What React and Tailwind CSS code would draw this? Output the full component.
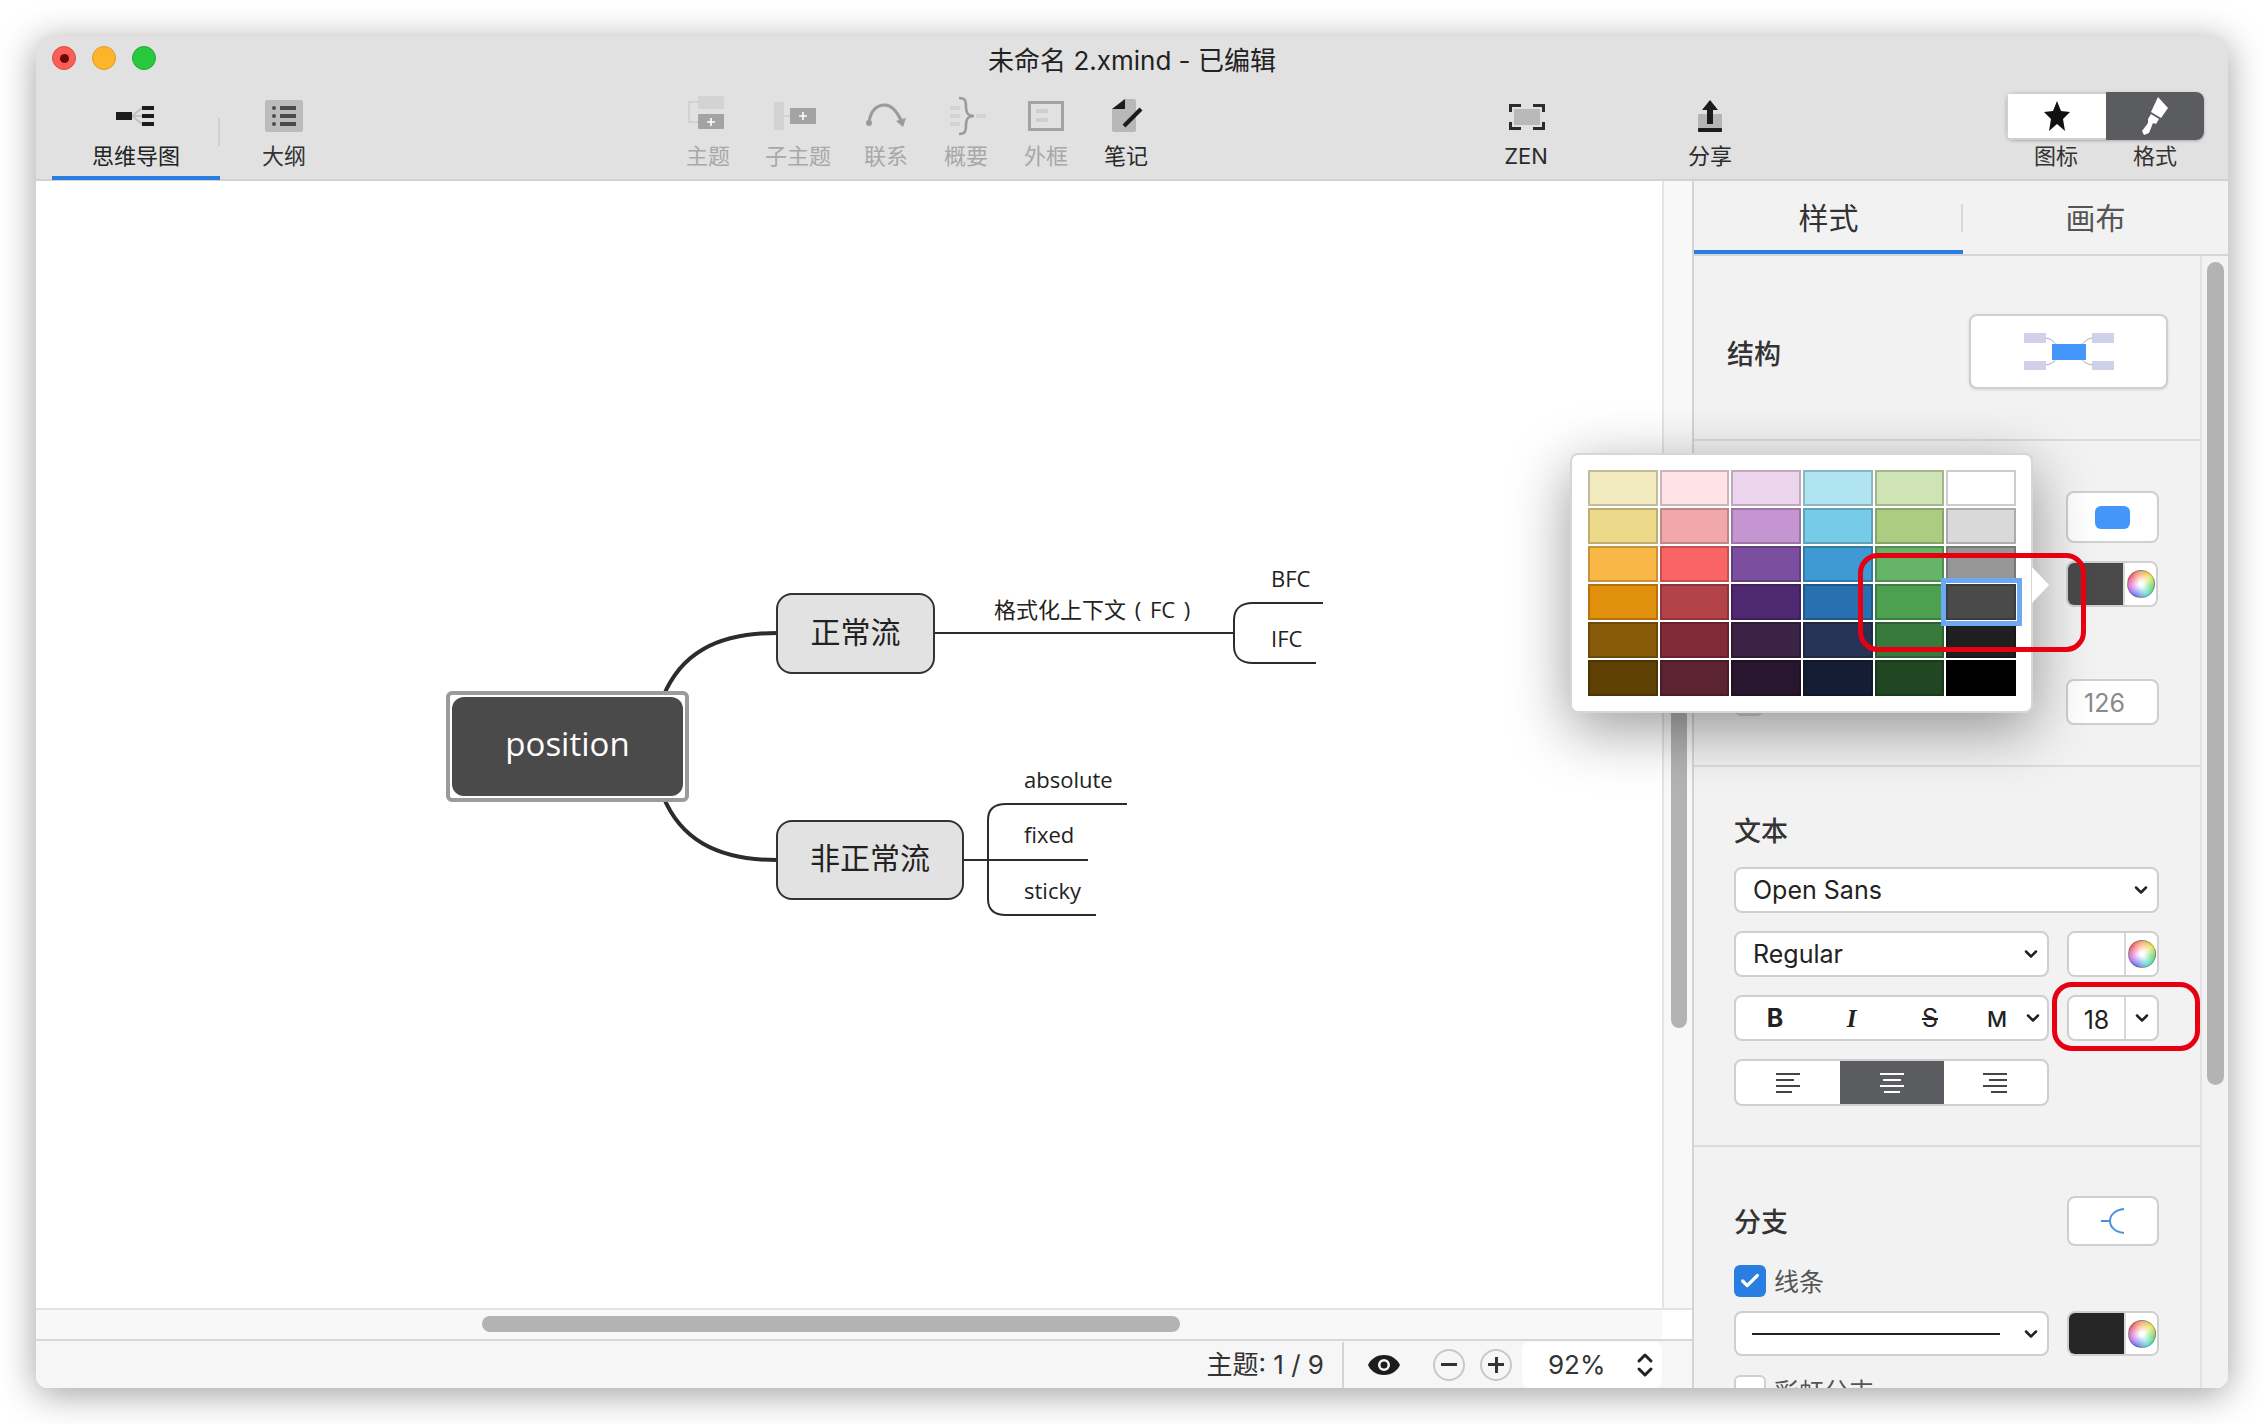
import { ChevronDown, ChevronUp, Check } from "lucide-react";

const swatches = [
  ["#f3ebc0", "#ffe3e6", "#ecd5ec", "#b0e4f1", "#cee4b4", "#ffffff"],
  ["#edd98a", "#f2a8a8", "#c495d0", "#76cce8", "#accc82", "#d9d9d9"],
  ["#f9b747", "#f96464", "#7b4ea0", "#3f9ad4", "#65b366", "#969696"],
  ["#e0900d", "#b34249", "#4f2872", "#2870b0", "#4ca050", "#4a4a4a"],
  ["#8a5a0b", "#822b38", "#3a2345", "#273355", "#377a3b", "#1f1f1f"],
  ["#5f4004", "#5c2332", "#28162f", "#141d33", "#214622", "#000000"],
];

function Icon({ children }) {
  return (
    <svg width="50" height="50" viewBox="0 0 50 50">
      {children}
    </svg>
  );
}

function ToolItem({ label, dim, className, children }) {
  return (
    <div className={`flex w-20 flex-col items-center ${className || ""}`}>
      <Icon>{children}</Icon>
      <div className={`-mt-[1px] text-[22px] leading-[30px] ${dim ? "text-[#a8a8a8]" : "text-[#2b2b2b]"}`}>{label}</div>
    </div>
  );
}

function Plus({ cx, cy }) {
  return <path d={`M${cx - 4} ${cy}H${cx + 4}M${cx} ${cy - 4}V${cy + 4}`} stroke="#fff" strokeWidth="1.6" />;
}

function Toolbar() {
  return (
    <div className="flex pl-4 pt-2">
      <div className="relative flex w-[168px] flex-col items-center">
        <Icon>
          <path d="M21 24L31 16M21 24H31M21 24L31 32" stroke="#c2c2c2" strokeWidth="2" />
          <rect x="5" y="20" width="16" height="8" fill="#1c1c1c" />
          <rect x="31" y="14" width="12" height="4" fill="#1c1c1c" />
          <rect x="31" y="22" width="12" height="4" fill="#1c1c1c" />
          <rect x="31" y="30" width="12" height="4" fill="#1c1c1c" />
        </Icon>
        <div className="-mt-[1px] text-[22px] leading-[30px] text-[#222]">思维导图</div>
        <div className="mt-[5px] h-1 w-full bg-[#2a7de1]" />
        <div className="absolute right-0 top-[26px] h-[28px] w-[2px] bg-[#cfcfcf]" />
      </div>
      <div className="flex w-[128px] flex-col items-center">
        <Icon>
          <rect x="6" y="8" width="38" height="32" rx="2" fill="#bcbcbc" />
          <g fill="#4a4a4a">
            <circle cx="15" cy="16" r="2" />
            <circle cx="15" cy="24" r="2" />
            <circle cx="15" cy="32" r="2" />
            <rect x="21" y="14" width="16" height="4" />
            <rect x="21" y="22" width="16" height="4" />
            <rect x="21" y="30" width="16" height="4" />
          </g>
        </Icon>
        <div className="-mt-[1px] text-[22px] leading-[30px] text-[#333]">大纲</div>
      </div>

      <ToolItem dim label="主题" className="ml-[320px]">
        <rect x="15" y="4" width="26" height="13" rx="1" fill="#d3d3d3" />
        <path d="M15 10H6V30H15" fill="none" stroke="#d3d3d3" strokeWidth="2" />
        <rect x="15" y="22" width="26" height="15" rx="1" fill="#a3a3a3" />
        <Plus cx={28} cy={30} />
      </ToolItem>
      <ToolItem dim label="子主题" className="ml-[10px]">
        <rect x="1" y="10" width="10" height="28" fill="#d3d3d3" />
        <path d="M11 24H17" stroke="#d3d3d3" strokeWidth="2" />
        <rect x="17" y="16" width="26" height="16" rx="1" fill="#a3a3a3" />
        <Plus cx={30} cy={24} />
      </ToolItem>
      <ToolItem dim label="联系" className="ml-2">
        <path d="M8 30C10 18 16 13 24 13C31 13 36 20 40 28" fill="none" stroke="#9a9a9a" strokeWidth="3" />
        <circle cx="8" cy="31" r="3" fill="#9a9a9a" />
        <path d="M35 29L45 26L42 35Z" fill="#9a9a9a" />
      </ToolItem>
      <ToolItem dim label="概要">
        <rect x="9" y="14" width="10" height="4" fill="#d3d3d3" />
        <rect x="9" y="22" width="10" height="4" fill="#d3d3d3" />
        <rect x="9" y="30" width="10" height="4" fill="#d3d3d3" />
        <path d="M18 6C25 6 25 10 25 15C25 20 26 24 33 24C26 24 25 28 25 33C25 38 25 42 18 42" fill="none" stroke="#9a9a9a" strokeWidth="2.6" />
        <rect x="35" y="22" width="10" height="4" fill="#d3d3d3" />
      </ToolItem>
      <ToolItem dim label="外框">
        <rect x="8.5" y="10.5" width="33" height="27" fill="none" stroke="#a3a3a3" strokeWidth="3" />
        <rect x="15" y="17" width="12" height="4" fill="#cfcfcf" />
        <rect x="15" y="26" width="12" height="4" fill="#cfcfcf" />
      </ToolItem>
      <ToolItem label="笔记">
        <path d="M24 7H33C34 7 35 8 35 9V38C35 39 34 40 33 40H13C12 40 11 39 11 38V17Z" fill="#b8b8b8" />
        <path d="M11 17L24 7V17Z" fill="#1c1c1c" />
        <path d="M23 34L40 17" stroke="#1c1c1c" strokeWidth="4" />
      </ToolItem>

      <ToolItem label="ZEN" className="ml-[320px]">
        <rect x="13" y="17" width="26" height="16" fill="#b9b9b9" />
        <path d="M9.5 20V13.5H20M32 13.5H42.5V20M42.5 30V36.5H32M20 36.5H9.5V30" fill="none" stroke="#2c2c2c" strokeWidth="3" />
      </ToolItem>
      <ToolItem label="分享" className="ml-[104px]">
        <rect x="13" y="22" width="24" height="18" rx="1" fill="#b5b5b5" />
        <rect x="13" y="36" width="24" height="4" rx="1" fill="#1c1c1c" />
        <path d="M25 8L17 18H22V32H28V18H33Z" fill="#1c1c1c" />
      </ToolItem>

      <div className="ml-[256px] flex flex-col">
        <div className="flex h-12 w-[198px] overflow-hidden rounded-lg shadow-[0_1px_3px_rgba(0,0,0,0.25)]">
          <div className="flex w-[100px] items-center justify-center border-2 border-r-0 border-[#cfcfcf] bg-white">
            <svg width="28" height="34" viewBox="0 0 28 34">
              <path d="M14 2L18 12L27 13L20 20L22 32L14 25L6 32L8 20L1 13L10 12Z" fill="#111" />
            </svg>
          </div>
          <div className="flex flex-1 items-center justify-center bg-[#5b5c60]">
            <svg width="28" height="40" viewBox="0 0 28 40">
              <path d="M17 1L27 12L20 22L10 16Z" fill="#fff" />
              <path d="M10 18L18 23L15 28L12 27L8 37L3 39L1 35L7 27L7 23Z" fill="#fff" />
            </svg>
          </div>
        </div>
        <div className="flex">
          <div className="mt-[1px] w-[100px] text-center text-[22px] leading-[30px] text-[#333]">图标</div>
          <div className="mt-[1px] w-[98px] text-center text-[22px] leading-[30px] text-[#333]">格式</div>
        </div>
      </div>
    </div>
  );
}

function MindMap() {
  return (
    <div className="relative min-w-0 flex-1 bg-white font-['Open_Sans','Noto_Sans_CJK_SC',sans-serif] text-[#222]">
      <svg className="absolute inset-0" width="1626" height="1127" viewBox="36 181 1626 1127" fill="none" stroke="#2c2c2c">
        <path d="M663 697C680 655 715 633 777 633" strokeWidth="4" />
        <path d="M663 796C680 838 715 860 777 860" strokeWidth="4" />
        <path d="M934 633H1233" strokeWidth="2" />
        <path d="M1323 603H1253C1240 603 1234 610 1234 620V646C1234 656 1240 663 1253 663H1316" strokeWidth="2" />
        <path d="M963 860H1088" strokeWidth="2" />
        <path d="M1127 804H1006C994 804 988 810 988 820V899C988 909 994 915 1006 915H1096" strokeWidth="2" />
      </svg>

      <div className="absolute left-[410px] top-[510px] flex h-[111px] w-[243px] rounded-md border-4 border-[#9b9b9b] bg-white p-[2px]">
        <div className="flex flex-1 items-center justify-center rounded-xl bg-[#4a4a4a] pb-[5px] text-[33px] text-white">position</div>
      </div>
      <div className="absolute left-[740px] top-[412px] flex h-[81px] w-[159px] items-center justify-center rounded-2xl border-2 border-[#333] bg-[#e2e2e2] pb-[5px] text-[30px]">正常流</div>
      <div className="absolute left-[740px] top-[639px] flex h-[80px] w-[188px] items-center justify-center rounded-2xl border-2 border-[#333] bg-[#e2e2e2] pb-[5px] text-[30px]">非正常流</div>

      <div className="absolute left-[958px] top-[412px] text-[22px] leading-8 [word-spacing:3px]">格式化上下文 ( FC )</div>
      <div className="absolute left-[1235px] top-[381px] text-[22px] leading-8">BFC</div>
      <div className="absolute left-[1235px] top-[441px] text-[22px] leading-8">IFC</div>
      <div className="absolute left-[988px] top-[582px] text-[22px] leading-8">absolute</div>
      <div className="absolute left-[988px] top-[637px] text-[22px] leading-8">fixed</div>
      <div className="absolute left-[988px] top-[693px] text-[22px] leading-8">sticky</div>
    </div>
  );
}

function ColorWheel() {
  return (
    <div className="flex flex-1 items-center justify-center bg-white">
      <div className="h-7 w-7 rounded-full border border-black/20 [background:radial-gradient(circle,#fff_10%,transparent_72%),conic-gradient(#f7a35c,#e8e25a,#63d96b,#5fd8d8,#6a78f0,#d86ae0,#f05c6a,#f7a35c)]" />
    </div>
  );
}

function ColorButton({ color }) {
  return (
    <div className="flex h-full w-[92px] overflow-hidden rounded-lg border-2 border-[#cfcfcf] bg-white">
      <div className={`w-[57px] border-r-2 border-[#d8d8d8] ${color}`} />
      <ColorWheel />
    </div>
  );
}

function Field({ className, children }) {
  return (
    <div className={`flex items-center rounded-lg border-2 border-[#cfcfcf] bg-white text-[25px] ${className || ""}`}>
      {children}
    </div>
  );
}

function AlignIcon({ widths, align, stroke }) {
  const rows = [0, 1, 2, 3];
  return (
    <svg width="24" height="20" viewBox="0 0 24 20" stroke={stroke} strokeWidth="2">
      {rows.map((r) => {
        const w = widths[r];
        const x = align === "left" ? 0 : align === "center" ? (24 - w) / 2 : 24 - w;
        return <path key={r} d={`M${x} ${r * 6 + 1}H${x + w}`} />;
      })}
    </svg>
  );
}

function Sidebar() {
  return (
    <div className="flex w-[536px] shrink-0 flex-col overflow-hidden border-l-2 border-[#d4d4d4] bg-[#f2f2f2]">
      <div className="relative flex h-[75px] shrink-0 border-b-2 border-[#d6d6d6]">
        <div className="flex w-[269px] flex-col items-center">
          <div className="flex h-[69px] items-center pt-[5px] text-[30px] text-[#333]">样式</div>
          <div className="h-1 w-full bg-[#2a7de1]" />
        </div>
        <div className="flex flex-1 items-center justify-center pt-[1px] text-[30px] text-[#555]">画布</div>
        <div className="absolute left-[267px] top-[23px] h-[28px] w-[2px] bg-[#d8d8d8]" />
      </div>
      <div className="flex min-h-0 flex-1">
        <div className="w-[508px] shrink-0 border-r-2 border-[#e2e2e2]">
          <div className="flex h-[185px] items-start justify-between border-b-2 border-[#dcdcdc] pl-[33px] pr-[32px] pt-[58px]">
            <div className="mt-[23px] text-[27px] font-medium leading-9 text-[#333]">结构</div>
            <div className="flex h-[75px] w-[199px] items-center justify-center rounded-lg border-2 border-[#cfcfcf] bg-white shadow-[0_1px_3px_rgba(0,0,0,0.12)]">
              <svg width="90" height="37" viewBox="0 0 90 37">
                <path d="M22 5C28 6 31 10 33 13M22 32C28 31 31 28 33 25M68 5C62 6 59 10 57 13M68 32C62 31 59 28 57 25" fill="none" stroke="#a8a8a8" />
                <rect x="0" y="0" width="22" height="10" fill="#d0d0ea" />
                <rect x="0" y="28" width="22" height="9" fill="#d0d0ea" />
                <rect x="68" y="0" width="22" height="10" fill="#d0d0ea" />
                <rect x="68" y="28" width="22" height="9" fill="#d0d0ea" />
                <rect x="28" y="11" width="34" height="16" fill="#4596fb" />
              </svg>
            </div>
          </div>

          <div className="flex h-[326px] justify-between border-b-2 border-[#dcdcdc] pl-[41px] pr-[41px] pt-[50px]">
            <div className="mt-[199px] h-[26px] w-7 rounded-md border-2 border-[#cfcfcf] bg-[#dcdcdc]" />
            <div className="flex w-[93px] flex-col">
              <div className="flex h-[52px] items-center justify-center rounded-lg border-2 border-[#cfcfcf] bg-white">
                <div className="h-[23px] w-[35px] rounded-md bg-[#4596fb]" />
              </div>
              <div className="mt-[18px] h-[46px]">
                <ColorButton color="bg-[#4a4a4a]" />
              </div>
              <Field className="mt-[72px] h-[46px] pl-4 pt-[3px] text-[#8a8a8a]">126</Field>
            </div>
          </div>

          <div className="h-[380px] border-b-2 border-[#dcdcdc] pl-10 pt-[47px]">
            <div className="text-[27px] font-medium leading-9 text-[#333]">文本</div>
            <Field className="mt-[17px] h-[46px] w-[425px] justify-between pl-[17px] pr-[6px] text-[#222]">
              <span className="pt-[2px]">Open Sans</span>
              <ChevronDown size={20} strokeWidth={3} color="#222" />
            </Field>
            <div className="mt-[18px] flex h-[46px] gap-[18px]">
              <Field className="w-[315px] justify-between pl-[17px] pr-[6px] text-[#222]">
                <span className="pt-[2px]">Regular</span>
                <ChevronDown size={20} strokeWidth={3} color="#222" />
              </Field>
              <ColorButton color="bg-white" />
            </div>
            <div className="mt-[18px] flex h-[46px] gap-[18px]">
              <Field className="w-[315px] text-[#222]">
                <span className="w-[78px] pt-[2px] text-center font-bold">B</span>
                <span className="w-[75px] pt-[2px] text-center font-['Liberation_Serif',serif] font-bold italic">I</span>
                <span className="w-[82px] pt-[2px] text-center line-through">S</span>
                <span className="w-[52px] pt-[2px] text-center text-[22px] font-medium">M</span>
                <ChevronDown size={20} strokeWidth={3} color="#222" />
              </Field>
              <Field className="w-[92px] overflow-hidden text-[#222]">
                <span className="h-[42px] w-[57px] border-r-2 border-[#d8d8d8] pt-[2px] text-center leading-[42px]">18</span>
                <span className="flex flex-1 justify-center">
                  <ChevronDown size={20} strokeWidth={3} color="#222" />
                </span>
              </Field>
            </div>
            <div className="mt-[18px] flex h-[47px] w-[315px] overflow-hidden rounded-lg border-2 border-[#cfcfcf] bg-white">
              <div className="flex flex-1 items-center justify-center">
                <AlignIcon widths={[24, 18, 24, 16]} align="left" stroke="#444" />
              </div>
              <div className="flex w-[104px] items-center justify-center bg-[#5b5c60]">
                <AlignIcon widths={[24, 18, 24, 16]} align="center" stroke="#fff" />
              </div>
              <div className="flex flex-1 items-center justify-center">
                <AlignIcon widths={[24, 18, 24, 16]} align="right" stroke="#444" />
              </div>
            </div>
          </div>

          <div className="pl-10 pr-[41px] pt-[49px]">
            <div className="flex h-[50px] items-center justify-between">
              <div className="pt-[4px] text-[27px] font-medium leading-9 text-[#333]">分支</div>
              <div className="flex h-full w-[92px] items-center justify-center rounded-lg border-2 border-[#cfcfcf] bg-white">
                <svg width="24" height="26" viewBox="0 0 24 26" fill="none" stroke="#4a90e2" strokeWidth="2">
                  <path d="M0 13H9M23 1C14 2 9 7 9 13C9 19 14 24 23 25" />
                </svg>
              </div>
            </div>
            <div className="mt-[19px] flex h-8 items-center gap-2">
              <div className="flex h-8 w-8 items-center justify-center rounded-md bg-[#2a7de1]">
                <Check size={22} strokeWidth={3.5} color="#fff" />
              </div>
              <span className="pt-[3px] text-[25px] text-[#555]">线条</span>
            </div>
            <div className="mt-[14px] flex h-[45px] gap-[18px]">
              <Field className="w-[315px] justify-between pl-4 pr-[6px]">
                <div className="h-[2px] w-[248px] bg-[#222]" />
                <ChevronDown size={20} strokeWidth={3} color="#222" />
              </Field>
              <ColorButton color="bg-[#262626]" />
            </div>
            <div className="mt-[19px] flex h-8 items-center gap-2">
              <div className="h-8 w-8 rounded-md border-2 border-[#cfcfcf] bg-white" />
              <span className="pt-[3px] text-[25px] text-[#555]">彩虹分支</span>
            </div>
          </div>
        </div>
        <div className="flex-1 pl-[5px] pt-[6px]">
          <div className="h-[823px] w-[17px] rounded-full bg-[#b3b3b3]" />
        </div>
      </div>
    </div>
  );
}

function StatusBar() {
  return (
    <div className="flex h-[49px] items-center justify-end border-t-2 border-[#d8d8d8] bg-[#f6f6f6] pr-[30px] text-[26px] text-[#333]">
      <span>主题: 1 / 9</span>
      <div className="ml-[18px] h-[46px] w-[2px] bg-[#d4d4d4]" />
      <svg className="ml-[23px]" width="34" height="22" viewBox="0 0 34 22">
        <path fillRule="evenodd" d="M17 1C25 1 31 6 33 11C31 16 25 21 17 21C9 21 3 16 1 11C3 6 9 1 17 1ZM17 5A6 6 0 1 0 17 17A6 6 0 1 0 17 5Z" fill="#1c1c1c" />
        <circle cx="17" cy="11" r="3.5" fill="#1c1c1c" />
      </svg>
      <div className="ml-8 flex h-8 w-8 items-center justify-center rounded-full border-2 border-[#c8c8c8] bg-[#f6f6f6]">
        <div className="h-[3px] w-4 bg-[#333]" />
      </div>
      <div className="relative ml-[15px] flex h-8 w-8 items-center justify-center rounded-full border-2 border-[#c8c8c8]">
        <div className="h-[3px] w-4 bg-[#333]" />
        <div className="absolute h-4 w-[3px] bg-[#333]" />
      </div>
      <div className="ml-[10px] flex h-[46px] w-[140px] items-center rounded-lg bg-white pl-[26px]">
        <span className="w-[85px]">92%</span>
        <div className="flex flex-col items-center">
          <ChevronUp size={24} strokeWidth={3} color="#222" className="-mb-[5px]" />
          <ChevronDown size={24} strokeWidth={3} color="#222" className="-mt-[5px]" />
        </div>
      </div>
    </div>
  );
}

export default function App() {
  return (
    <div className="h-[1424px] w-[2264px] overflow-hidden bg-white p-9 font-['Inter','Noto_Sans_CJK_SC',sans-serif]">
      <div className="relative flex h-[1352px] w-[2192px] flex-col overflow-hidden rounded-xl bg-white shadow-[0_6px_36px_rgba(0,0,0,0.38)]">
        {/* Title bar + toolbar */}
        <div className="h-[145px] shrink-0 border-b-2 border-[#d2d2d2] bg-[#e1e1e1]">
          <div className="grid h-12 grid-cols-[1fr_auto_1fr]">
            <div className="flex items-start gap-4 pl-4 pt-[10px]">
              <div className="flex h-6 w-6 items-center justify-center rounded-full border border-[#dd4a45] bg-[#fb5d57]">
                <div className="h-[9px] w-[9px] rounded-full bg-[#6a0a06]" />
              </div>
              <div className="h-6 w-6 rounded-full border border-[#dc9c26] bg-[#fdb42b]" />
              <div className="h-6 w-6 rounded-full border border-[#22a535] bg-[#28c93f]" />
            </div>
            <div className="flex items-center text-[26px] text-[#222]">未命名 2.xmind - 已编辑</div>
            <div />
          </div>
          <Toolbar />
        </div>

        {/* Canvas + inspector */}
        <div className="flex min-h-0 flex-1">
          <div className="flex min-w-0 flex-1 flex-col">
            <div className="flex min-h-0 flex-1">
              <MindMap />
              <div className="w-[30px] shrink-0 border-l-2 border-[#e4e4e4] bg-[#f8f8f8] pl-[7px] pt-[320px]">
                <div className="h-[527px] w-[16px] rounded-full bg-[#b3b3b3]" />
              </div>
            </div>
            <div className="flex h-[31px] shrink-0 border-t-2 border-[#e2e2e2]">
              <div className="w-[1626px] bg-[#f8f8f8] pl-[446px] pt-[6px]">
                <div className="h-4 w-[698px] rounded-full bg-[#b3b3b3]" />
              </div>
              <div className="flex-1 bg-white" />
            </div>
            <StatusBar />
          </div>
          <Sidebar />
        </div>

        {/* Colour picker popover */}
        <div className="absolute left-[1534px] top-[417px] h-[260px] w-[463px] rounded-lg border-2 border-[#d6d6d6] bg-white pl-4 pt-[15px] shadow-[0_16px_60px_rgba(0,0,0,0.4)]">
          <div className="grid grid-cols-[repeat(6,69.7px)] grid-rows-[repeat(6,36px)] gap-[2px]">
            {swatches.flat().map((c, i) => (
              <div key={i} className="border-2 border-black/20" style={{ backgroundColor: c }} />
            ))}
          </div>
          <div className="absolute left-[369px] top-[123px] h-[48px] w-[81px] border-[5px] border-[#6da9f3]" />
          <svg className="absolute left-[460px] top-[112px]" width="18" height="36" viewBox="0 0 18 36">
            <path d="M0 0L17 18L0 36Z" fill="#fff" />
          </svg>
        </div>

        {/* Red annotation boxes */}
        <div className="absolute left-[1822px] top-[517px] h-[99px] w-[228px] rounded-[20px] border-[5px] border-[#e60012]" />
        <div className="absolute left-[2016px] top-[946px] h-[69px] w-[148px] rounded-[20px] border-[5px] border-[#e60012]" />
      </div>
    </div>
  );
}
